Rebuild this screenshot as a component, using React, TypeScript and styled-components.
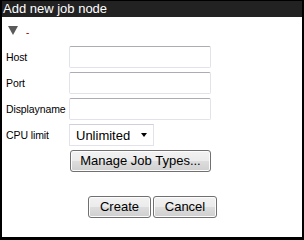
import styled, { createGlobalStyle } from 'styled-components';

const GlobalStyle = createGlobalStyle`
  html, body {
    margin: 0;
    padding: 0;
    background: #000;
  }
  body {
    font-family: 'Liberation Sans', Arial, sans-serif;
  }
`;

const Dialog = styled.div`
  width: 300px;
  height: 236px;
  margin: 1px 0 0 2px;
  background: #fff;
  display: flex;
  flex-direction: column;
`;

const TitleBar = styled.div`
  height: 16px;
  background: #222222;
  color: #fff;
  font-size: 13px;
  line-height: 16px;
  padding-left: 1px;
  white-space: nowrap;
`;

const Toggle = styled.div`
  display: flex;
  align-items: flex-start;
  height: 28px;
  padding: 9px 0 0 6px;
  box-sizing: border-box;
`;

const Arrow = styled.span`
  width: 0;
  height: 0;
  border-left: 5px solid transparent;
  border-right: 5px solid transparent;
  border-top: 9px solid #5a5a5a;
`;

const Dash = styled.span`
  color: #a00000;
  font-size: 10px;
  line-height: 10px;
  margin: 2px 0 0 8px;
`;

const Form = styled.div`
  display: grid;
  grid-template-columns: 65px 142px;
  grid-auto-rows: 22px;
  row-gap: 4px;
  padding: 1px 0 0 2px;
  align-items: center;
`;

const Label = styled.label`
  font-size: 10.5px;
  letter-spacing: -0.1px;
  color: #000;
  padding-left: 2px;
  white-space: nowrap;
`;

const TextInput = styled.input`
  box-sizing: border-box;
  width: 142px;
  height: 22px;
  border: 1px solid #e2e3ea;
  border-top-color: #abadb3;
  border-radius: 2px;
  padding: 0 3px;
  font-size: 12px;
  font-family: inherit;
  outline: none;
`;

const Select = styled.div`
  box-sizing: border-box;
  width: 85px;
  height: 22px;
  border: 1px solid #e2e3ea;
  border-top-color: #cfd1d8;
  display: flex;
  align-items: center;
  justify-content: space-between;
  padding: 0 6px 0 6px;
  font-size: 13px;
`;

const Caret = styled.span`
  width: 0;
  height: 0;
  border-left: 3.5px solid transparent;
  border-right: 3.5px solid transparent;
  border-top: 4px solid #000;
`;

const Button = styled.button<{ $w: number }>`
  box-sizing: border-box;
  width: ${(p) => p.$w}px;
  height: 22px;
  border: 1px solid #707070;
  border-radius: 3px;
  background: linear-gradient(#f2f2f2 0%, #ebebeb 50%, #dddddd 51%, #cfcfcf 100%);
  box-shadow: inset 0 0 0 1px #fcfcfc;
  font-family: 'Liberation Sans', Arial, sans-serif;
  font-size: 13px;
  color: #000;
  padding: 0;
  line-height: 18px;
`;

const ManageCell = styled.div`
  grid-column: 2;
  padding-left: 1px;
  display: flex;
`;

const Actions = styled.div`
  display: flex;
  justify-content: center;
  gap: 2px;
  margin-top: 24px;
  padding-left: 1px;
`;

export default function App() {
  return (
    <>
      <GlobalStyle />
      <Dialog>
        <TitleBar>Add new job node</TitleBar>
        <Toggle>
          <Arrow />
          <Dash>-</Dash>
        </Toggle>
        <Form>
          <Label>Host</Label>
          <TextInput />
          <Label>Port</Label>
          <TextInput />
          <Label>Displayname</Label>
          <TextInput />
          <Label>CPU limit</Label>
          <Select>
            Unlimited
            <Caret />
          </Select>
          <ManageCell>
            <Button $w={149}>Manage Job Types...</Button>
          </ManageCell>
        </Form>
        <Actions>
          <Button $w={63}>Create</Button>
          <Button $w={64}>Cancel</Button>
        </Actions>
      </Dialog>
    </>
  );
}
